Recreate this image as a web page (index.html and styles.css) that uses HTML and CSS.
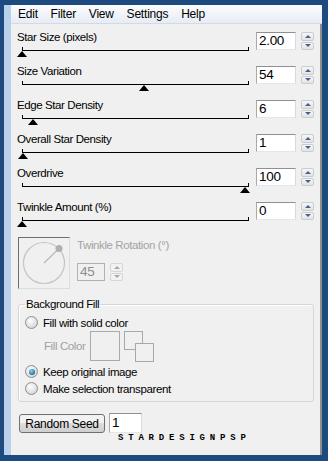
FILE: index.html
```html
<!DOCTYPE html>
<html lang="en">
<head>
    <meta charset="UTF-8">
    <title>Star Effect</title>
    <link rel="stylesheet" href="styles.css">
</head>
<body>

<div class="window">
    <div class="menubar">
        <span>Edit</span><span>Filter</span><span>View</span><span>Settings</span><span>Help</span>
    </div>

    <div class="panel">
        <div class="row">
            <div class="left">
                <div class="label">Star Size (pixels)</div>
                <div class="track"><span class="thumb" style="left: 0%"></span></div>
            </div>
            <div class="num">2.00</div>
            <div class="spin"><span class="up"></span><span class="down"></span></div>
        </div>
        <div class="row">
            <div class="left">
                <div class="label">Size Variation</div>
                <div class="track"><span class="thumb" style="left: 54%"></span></div>
            </div>
            <div class="num">54</div>
            <div class="spin"><span class="up"></span><span class="down"></span></div>
        </div>
        <div class="row">
            <div class="left">
                <div class="label">Edge Star Density</div>
                <div class="track"><span class="thumb" style="left: 5%"></span></div>
            </div>
            <div class="num">6</div>
            <div class="spin"><span class="up"></span><span class="down"></span></div>
        </div>
        <div class="row">
            <div class="left">
                <div class="label">Overall Star Density</div>
                <div class="track"><span class="thumb" style="left: 0.5%"></span></div>
            </div>
            <div class="num">1</div>
            <div class="spin"><span class="up"></span><span class="down"></span></div>
        </div>
        <div class="row">
            <div class="left">
                <div class="label">Overdrive</div>
                <div class="track"><span class="thumb" style="left: 99%"></span></div>
            </div>
            <div class="num">100</div>
            <div class="spin"><span class="up"></span><span class="down"></span></div>
        </div>
        <div class="row">
            <div class="left">
                <div class="label">Twinkle Amount (%)</div>
                <div class="track"><span class="thumb" style="left: 0%"></span></div>
            </div>
            <div class="num">0</div>
            <div class="spin"><span class="up"></span><span class="down"></span></div>
        </div>

        <div class="rotation">
            <div class="dial">
                <svg width="50" height="50" viewBox="0 0 50 50">
                    <circle cx="25" cy="25" r="20.5" fill="none" stroke="#c4c4c4" stroke-width="1.2"/>
                    <line x1="25" y1="25" x2="40" y2="10.5" stroke="#b8b8b8" stroke-width="1.2"/>
                    <circle cx="40" cy="10.5" r="3.5" fill="#b0b0b0"/>
                </svg>
            </div>
            <div class="rot-side">
                <div class="rot-label">Twinkle Rotation (°)</div>
                <div class="rot-input">
                    <div class="num small disabled">45</div>
                    <div class="spin disabled"><span class="up"></span><span class="down"></span></div>
                </div>
            </div>
        </div>

        <fieldset class="group">
            <legend>Background Fill</legend>
            <div class="radio-row first"><span class="radio"></span>Fill with solid color</div>
            <div class="fill-row">
                <span class="fill-label">Fill Color</span>
                <span class="swatch"></span>
                <svg class="swap" width="30" height="31" viewBox="0 0 30 31">
                    <rect x="0.5" y="0.5" width="18" height="18" fill="#f0f0f0" stroke="#a8a8a8"/>
                    <rect x="11.5" y="12.5" width="18" height="18" fill="#f0f0f0" stroke="#a8a8a8"/>
                </svg>
            </div>
            <div class="radio-row gap"><span class="radio checked"></span>Keep original image</div>
            <div class="radio-row"><span class="radio"></span>Make selection transparent</div>
        </fieldset>

        <div class="seed">
            <button class="seed-btn">Random Seed</button>
            <div class="seed-input">1</div>
        </div>
        <div class="stamp">STARDESIGNPSP</div>
    </div>
</div>

</body>
</html>
```

FILE: styles.css
```css
body {
    margin: 0;
    background-color: #1d4b7f;
    font-family: "Liberation Sans", Arial, sans-serif;
    font-size: 11.5px;
    letter-spacing: -0.4px;
    color: #000;
}
.window {
    margin: 5px 6px 6px 4px;
    width: 318px;
    height: 450px;
    box-sizing: border-box;
    border-left: 7px solid #b9d1ea;
    background-color: #f0f0f0;
    overflow: hidden;
    display: flex;
    flex-direction: column;
}
.menubar {
    height: 19px;
    box-sizing: border-box;
    border-bottom: 1px solid #d3dae4;
    background: linear-gradient(#fbfcfe, #e6ecf5);
    display: flex;
    align-items: center;
    padding-left: 0.5px;
    font-size: 12px;
    letter-spacing: -0.2px;
}
.menubar span {
    padding: 0 6.4px;
}
.panel {
    flex: 1;
    padding-top: 4px;
    border-right: 2px solid #8e8e8e;
}
.row {
    display: grid;
    grid-template-columns: 234px 40px 13px;
    column-gap: 5px;
    height: 34px;
    padding-left: 6px;
}
.label {
    height: 16px;
    line-height: 16px;
    padding-top: 1px;
}
.track {
    position: relative;
    margin: 2px 0 0 5px;
    width: 227px;
    height: 4px;
    box-sizing: border-box;
    border: 1px solid #000;
    border-top: none;
}
.thumb {
    position: absolute;
    top: 4px;
    margin-left: -6px;
    width: 0;
    height: 0;
    border-left: 5.5px solid transparent;
    border-right: 5.5px solid transparent;
    border-bottom: 6px solid #000;
}
.num {
    margin-top: 4px;
    height: 18px;
    box-sizing: border-box;
    border: 1px solid;
    border-color: #8d8f93 #d7dbe1 #e3e7ec #a6a9ae;
    background-color: #fff;
    font-size: 13.5px;
    letter-spacing: -0.3px;
    line-height: 16px;
    padding-left: 2px;
}
.spin {
    margin-top: 4px;
    width: 13px;
    height: 18px;
    display: flex;
    flex-direction: column;
    gap: 1px;
}
.spin span {
    flex: 1;
    box-sizing: border-box;
    border: 1px solid #c9ccd2;
    border-radius: 2px;
    background: linear-gradient(#f6f6f6, #e3e3e3);
    display: flex;
    align-items: center;
    justify-content: center;
}
.spin .up::after, .spin .down::after {
    content: "";
    width: 0;
    height: 0;
    border-left: 3px solid transparent;
    border-right: 3px solid transparent;
}
.spin .up::after {
    border-bottom: 3px solid #4a5f8e;
}
.spin .down::after {
    border-top: 3px solid #4a5f8e;
}
.spin.disabled span {
    border-color: #d6d6d6;
    background: #f2f2f2;
}
.spin.disabled .up::after {
    border-bottom-color: #a8a8a8;
}
.spin.disabled .down::after {
    border-top-color: #a8a8a8;
}
.rotation {
    display: flex;
    margin: 5px 0 0 7px;
}
.dial {
    width: 52px;
    height: 52px;
    box-sizing: border-box;
    border: 1px solid;
    border-color: #6e6e6e #dcdcdc #dcdcdc #6e6e6e;
    background-color: #f0f0f0;
}
.dial svg {
    display: block;
}
.rot-side {
    margin-left: 7px;
}
.rot-label {
    line-height: 16px;
    color: #a3a3a3;
}
.rot-input {
    display: flex;
    gap: 5px;
    margin-top: 10px;
}
.num.small {
    margin-top: 0;
    width: 28px;
}
.num.disabled {
    color: #8c8c8c;
    border-color: #adb2b5;
    background-color: #f0f0f0;
}
.rot-input .spin {
    margin-top: 0;
}
.group {
    margin: 8px 0 0 7px;
    width: 296px;
    box-sizing: border-box;
    border: 1px solid #d5d5d5;
    border-radius: 3px;
    padding: 0 6px 4px;
    box-shadow: inset 1px 1px 0 #fff;
}
.group legend {
    padding: 0 1px;
    line-height: 14px;
}
.radio-row {
    display: flex;
    align-items: center;
    height: 17px;
}
.radio-row.first {
    margin-top: 3px;
}
.radio-row.gap {
    margin-top: 2px;
}
.radio {
    width: 11px;
    height: 11px;
    margin-right: 5px;
    border-radius: 50%;
    border: 1px solid #8f8f8f;
    background: radial-gradient(circle at 40% 35%, #ffffff, #d9d9d9 70%, #c4c4c4);
    display: flex;
    align-items: center;
    justify-content: center;
}
.radio.checked::after {
    content: "";
    width: 6px;
    height: 6px;
    border-radius: 50%;
    background: radial-gradient(circle at 40% 35%, #8fd6f7, #1d6fa6 70%, #0f4d7a);
}
.fill-row {
    display: flex;
    align-items: center;
    height: 30px;
    padding-left: 19px;
}
.fill-label {
    width: 46px;
    color: #a0a0a0;
}
.swatch {
    width: 30px;
    height: 30px;
    box-sizing: border-box;
    border: 1px solid #ababab;
}
.swap {
    margin-left: 4px;
    display: block;
}
.seed {
    display: flex;
    align-items: flex-start;
    margin: 11px 0 0 8px;
}
.seed-btn {
    margin-top: 1px;
    width: 86px;
    height: 19px;
    padding: 0;
    border: 1px solid #707070;
    border-radius: 3px;
    background: linear-gradient(#f2f2f2 50%, #dddddd 50%, #cfcfcf);
    font-family: "Liberation Sans", Arial, sans-serif;
    font-size: 12px;
    letter-spacing: -0.3px;
    color: #000;
}
.seed-input {
    margin-left: 4px;
    width: 33px;
    height: 20px;
    box-sizing: border-box;
    border: 1px solid;
    border-color: #8d8f93 #d7dbe1 #e3e7ec #a6a9ae;
    background-color: #fff;
    font-size: 13.5px;
    line-height: 18px;
    padding-left: 2px;
}
.stamp {
    margin: 1px 0 0 107px;
    font-family: "Liberation Mono", monospace;
    font-weight: bold;
    font-size: 9px;
    letter-spacing: 4.8px;
    line-height: 9px;
}
```
